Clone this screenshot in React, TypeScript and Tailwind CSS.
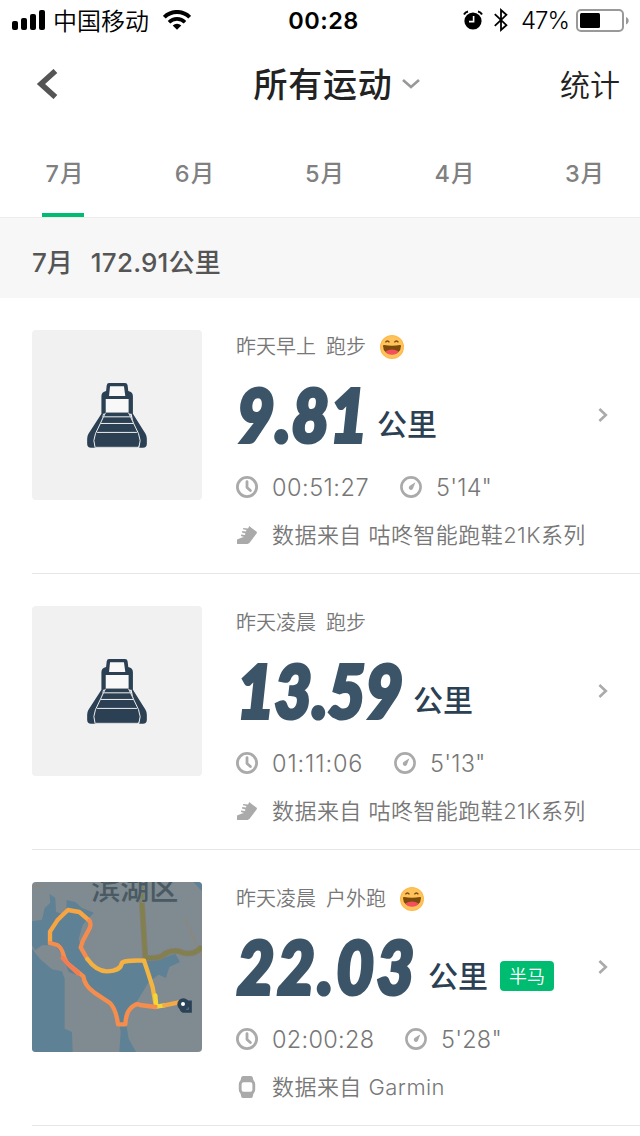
import React from "react";

type Run = {
  time: string;
  kind: string;
  mood?: boolean;
  distance: string;
  // digits are condensed, so each one reserves its own width
  distanceClass: string;
  duration: string;
  durationClass: string;
  pace: string;
  source: string;
  device: "shoe" | "watch";
  badge?: string;
  map?: boolean;
};

const months = ["7", "6", "5", "4", "3"];

const runs: Run[] = [
  {
    time: "昨天早上",
    kind: "跑步",
    mood: true,
    distance: "9.81",
    distanceClass: "w-[140px] tracking-[1.2px]",
    duration: "00:51:27",
    durationClass: "w-[128px] tracking-[0.5px]",
    pace: "5'14\"",
    source: "咕咚智能跑鞋21K系列",
    device: "shoe",
  },
  {
    time: "昨天凌晨",
    kind: "跑步",
    distance: "13.59",
    distanceClass: "w-[176px] tracking-[0.4px]",
    duration: "01:11:06",
    durationClass: "w-[122px] tracking-[0.9px]",
    pace: "5'13\"",
    source: "咕咚智能跑鞋21K系列",
    device: "shoe",
  },
  {
    time: "昨天凌晨",
    kind: "户外跑",
    mood: true,
    distance: "22.03",
    distanceClass: "w-[191px] tracking-[3.6px]",
    duration: "02:00:28",
    durationClass: "w-[133px] tracking-[0.3px]",
    pace: "5'28\"",
    source: "Garmin",
    device: "watch",
    badge: "半马",
    map: true,
  },
];

function StatusBar() {
  return (
    <div className="flex h-10 items-center pl-3 pr-[11px] text-black">
      <div className="flex flex-1 items-center">
        <svg viewBox="0 0 33 20" className="w-[33px] h-5" fill="currentColor">
          <rect x="0" y="11" width="6" height="9" rx="2" />
          <rect x="9" y="8" width="6" height="12" rx="2" />
          <rect x="18" y="4" width="6" height="16" rx="2" />
          <rect x="27" y="0" width="6" height="20" rx="2" />
        </svg>
        <span className="ml-[8px] pt-[3px] text-[24px] font-[350] leading-10">中国移动</span>
        <svg
          viewBox="0 0 28 20"
          className="ml-[14px] w-7 h-5"
          fill="none"
          stroke="currentColor"
          strokeWidth="4"
        >
          <path d="M1.3 7.2a18 18 0 0 1 25.4 0" />
          <path d="M6 12.2a11.4 11.4 0 0 1 16 0" strokeWidth="3.6" />
          <path d="M14 19.8l-4.3-4.4a6.2 6.2 0 0 1 8.6 0z" fill="currentColor" stroke="none" />
        </svg>
      </div>
      <span className="translate-x-[3px] pt-px text-[23.5px] font-semibold leading-10 tracking-[0.5px]">
        00:28
      </span>
      <div className="flex flex-1 items-center justify-end">
        <svg viewBox="0 0 20 20" className="w-5 h-5" fill="none">
          <circle cx="10" cy="11" r="8.6" fill="black" />
          <path d="M10.6 6v5.6H6" stroke="white" strokeWidth="1.6" />
          <path d="M1 4.4a6 6 0 0 1 4-3M19 4.4a6 6 0 0 0-4-3" stroke="black" strokeWidth="2" />
        </svg>
        <svg
          viewBox="0 0 14 24"
          className="ml-[11px] w-3.5 h-6"
          fill="none"
          stroke="currentColor"
          strokeWidth="1.8"
        >
          <path d="M.8 6.2l11.6 11L7 22V2l5.4 4.8L.8 17.8" />
        </svg>
        <span className="ml-[13px] pt-px text-[24px] font-[350] leading-10 tracking-[-1px]">
          47%
        </span>
        <svg viewBox="0 0 53 24" className="ml-[7px] mt-px w-[53px] h-6" fill="none">
          <rect x="1" y="1" width="46" height="21" rx="4" stroke="#999" strokeWidth="2" />
          <rect x="4" y="4" width="20" height="15" rx="1.5" fill="black" />
          <path d="M50 8c3.6 1.4 3.6 6 0 7.4z" fill="#999" />
        </svg>
      </div>
    </div>
  );
}

function NavBar() {
  return (
    <div className="flex h-[88px] items-center pl-9 pr-5 text-[#222]">
      <div className="flex-1">
        <svg
          viewBox="0 0 22 30"
          className="w-[22px] h-[30px]"
          fill="none"
          stroke="#555"
          strokeWidth="5.6"
        >
          <path d="M19.4 2L5 15l14.4 13" />
        </svg>
      </div>
      <div className="flex translate-x-[9px] items-center">
        <span className="pt-px text-[34px] font-medium leading-[50px] tracking-[0.7px]">
          所有运动
        </span>
        <svg
          viewBox="0 0 18 10"
          className="ml-[10px] w-[18px] h-2.5"
          fill="none"
          stroke="#999"
          strokeWidth="2.6"
        >
          <path d="M1 1l8 7 8-7" />
        </svg>
      </div>
      <div className="flex-1 pt-px text-right text-[30px] font-[350] leading-[44px]">统计</div>
    </div>
  );
}

function MonthTabs() {
  return (
    <div className="flex h-[90px] border-b border-[#ececec] overflow-hidden">
      <div className="-ml-0.5 flex shrink-0">
        {months.map((month, i) => (
          <button
            key={month}
            type="button"
            className="flex w-[130px] flex-col items-center text-[#808080]"
          >
            <span className="flex h-[86px] items-center pl-1 pt-[6px] text-[23.5px] font-medium tracking-[1px]">
              {month}月
            </span>
            {i === 0 && <span className="h-1 w-[42px] bg-[#00bc71]"></span>}
          </button>
        ))}
      </div>
    </div>
  );
}

function Treadmill() {
  return (
    <svg viewBox="0 0 180 196" className="w-[60px] h-[65px]" fill="#2c4054">
      <path d="M66 0h48q7 0 8 7l2 17q14 3 14 16v53l38 60q4 7 4 15v15q0 12-12 12h-12L134 93H48L24 195H12q-12 0-12-12v-15q0-8 4-15l39-60V40q0-13 14-16l2-17q1-7 7-7z" />
      <path d="M69 10h42l4 29H66zM56 48h69v42H56z" fill="#f8f8f8" />
      <path d="M53 90h74l25 57q14 28 0 48H25q-14-20 0-48z" />
      <g fill="none" stroke="#f1f1f1" strokeWidth="3">
        <path d="M55 90L25 153q-9 20-1 42M125 90l30 63q9 20 1 42M51 102h78M41 122h98M30 149h120" />
        <path d="M25 194h130" />
      </g>
    </svg>
  );
}

function RouteMap() {
  return (
    <svg viewBox="0 0 510 510" className="w-full h-full" fill="none">
      <rect width="510" height="510" fill="#808b91" />
      <g fill="#5f8195">
        <path d="M0 118L30 113 38 78 55 62 52 35 70 48 72 90 102 98 104 54 130 60 150 78 186 92 166 112 152 130 140 170 148 200 175 240 200 262H250L275 240 330 232 400 225 430 215 444 240 412 255 402 288 380 278 350 300 320 350 305 370 290 380 282 420 290 470 312 510H262L266 450 258 400 240 365 180 330 150 285 110 270 90 220 70 190 30 190 10 205 0 190z" />
        <path d="M0 200L25 232 60 262 90 268 98 290V440L120 450 122 510H0zM484 0h26v28z" />
      </g>
      <path d="M0 12h34M458 108l54 122M470 172l18-8" stroke="#8d867a" strokeWidth="4" />
      <g strokeLinejoin="round">
        <path
          d="M330 0v66l10 162q48 2 60-14 30-14 52-2 34 10 58-18"
          stroke="#887d70"
          strokeWidth="18"
        />
        <path d="M330 0v66l10 162q48 2 60-14 30-14 52-2 34 10 58-18" stroke="#80814c" strokeWidth="12" />
      </g>
      <text
        x="178"
        y="54"
        fontSize="87"
        fontWeight="500"
        fill="#4a5962"
        stroke="#7d8a91"
        strokeWidth="5"
        paintOrder="stroke"
      >
        滨湖区
      </text>
      <g strokeWidth="13" strokeLinejoin="round" strokeLinecap="round">
        <path d="M54 183v-34l22-34 16-16 16-15 34 6 30 26" stroke="#f7a442" />
        <path d="M172 116q8 12-2 28l-18 34-6 18 20 35" stroke="#f58c4e" />
        <path d="M166 231q26 36 58 37 42 0 46-26 14-8 66-6" stroke="#f4b142" />
        <path d="M336 236q12 34 26 80l10 58" stroke="#f2b541" />
        <path d="M370 340l3 34 24-4" stroke="#f5d638" />
        <path d="M397 370l44-9" stroke="#f5a944" />
        <path
          d="M54 183l22 6q12 7 18 28 4 24 28 40l32 26q4 28 32 48l48 32q18 18 24 64h22q2-34 14-46 18-20 30-12l46 6"
          stroke="#f58d4d"
        />
        <path d="M92 228q18 22 46 46" stroke="#f37c50" />
      </g>
      <path d="M445 358h32v32h-24q-8-4-8-12z" fill="#2c4257" stroke="#2c4257" strokeWidth="5" />
      <circle cx="454" cy="367" r="18" fill="#2c4257" />
      <circle cx="453" cy="366" r="6" fill="white" />
      <path d="M463 382h6v-6" stroke="#80909b" strokeWidth="2" />
    </svg>
  );
}

function Grin() {
  return (
    <svg viewBox="0 0 24 24" className="ml-[14px] w-6 h-6" fill="none">
      <circle cx="12" cy="12" r="12" fill="#ffb94b" />
      <circle cx="12" cy="12" r="10.8" fill="#ffc35b" />
      <path d="M5.4 7.4q2-2.8 4 0M14.4 7.4q2-2.8 4 0" stroke="#7d4913" strokeWidth="1.4" />
      <path d="M3 11q0-1 1-.9 8 1.2 16 0 1-.1 1 .9-.4 8-9 8t-9-8z" fill="#7d4b0a" />
      <path d="M5.2 16.6q6.8-4 13.6 0-2.2 3.2-6.8 3.2t-6.8-3.2z" fill="#f2505c" />
    </svg>
  );
}

function ClockIcon() {
  return (
    <svg
      viewBox="0 0 22 22"
      className="w-[22px] h-[22px]"
      fill="none"
      stroke="#aaa"
      strokeWidth="2.8"
    >
      <circle cx="11" cy="11" r="9.6" />
      <path d="M11 5.6v5.8l3.4 3.2" strokeLinecap="round" strokeLinejoin="round" />
    </svg>
  );
}

function PaceIcon() {
  return (
    <svg
      viewBox="0 0 22 22"
      className="w-[22px] h-[22px]"
      fill="none"
      stroke="#aaa"
      strokeWidth="2.6"
    >
      <circle cx="11" cy="11" r="9.6" />
      <path d="M15.4 6.2l-2.5 6.6a2.2 2.2 0 1 1-3-3z" fill="#aaa" stroke="none" />
    </svg>
  );
}

function DeviceIcon({ device }: { device: Run["device"] }) {
  if (device === "watch") {
    return (
      <svg viewBox="0 0 22 22" className="w-[22px] h-[22px]" fill="#aaa">
        <path d="M7 0h8q1.4 0 1.8 1.6l.8 3.8H4.4l.8-3.8Q5.6 0 7 0zM4.4 16.6h13.2l-.8 3.8Q16.4 22 15 22H7q-1.4 0-1.8-1.6z" />
        <rect
          x="4.2"
          y="4.8"
          width="13.6"
          height="12.4"
          rx="3.4"
          fill="white"
          stroke="#aaa"
          strokeWidth="2.8"
        />
      </svg>
    );
  }
  return (
    <svg viewBox="0 0 22 22" className="w-[22px] h-[22px]" fill="#aaa">
      <path d="M1 20v-4.5L6 13.5 8 13l-3-1v-1.4l4 .4.4-1.6L6 8.4 6.2 7l3.8.6.4-1.6L7 5.2 7.2 4l4.8.6L13.4 2 15 3.6l6 4.4-.4 1.4L13.4 19l-1.8 1z" />
    </svg>
  );
}

function RunItem({ run }: { run: Run }) {
  return (
    <div className="ml-8 flex h-[276px] border-b border-[#e6e6e6] pt-8">
      <div className="flex h-[170px] w-[170px] shrink-0 items-center justify-center overflow-hidden rounded bg-[#f1f1f1]">
        {run.map ? <RouteMap /> : <Treadmill />}
      </div>
      <div className="ml-[34px] flex-1 text-[#777]">
        <div className="flex h-8 items-center pt-px text-[20px] font-[350]">
          <span>{run.time}</span>
          <span className="ml-2.5">{run.kind}</span>
          {run.mood && <Grin />}
        </div>
        <div className="flex h-[106px] items-center">
          <div className={`pl-px pb-px ${run.distanceClass} box-content`}>
            <span className="inline-block origin-left scale-x-[0.88] whitespace-nowrap font-['Lato'] text-[73px] font-black italic leading-[101px] text-[#3c5468] [-webkit-text-stroke:4px_#3c5468]">
              {run.distance}
            </span>
          </div>
          <span className="pt-[18px] text-[30px] font-medium leading-9 text-[#2c4054]">公里</span>
          {run.badge && (
            <span className="ml-3 mt-[18px] flex h-[30px] w-[54px] items-center justify-center rounded bg-[#00bc71] text-[18px] font-[350] text-white">
              {run.badge}
            </span>
          )}
          <svg
            viewBox="0 0 10 14"
            className="ml-auto mr-8 w-2.5 h-3.5"
            fill="none"
            stroke="#aaa"
            strokeWidth="2.6"
          >
            <path d="M1.4 1l6.4 6-6.4 6" />
          </svg>
        </div>
        <div className="flex h-[38px] items-center text-[23.5px] font-[350]">
          <ClockIcon />
          <span className={`ml-[14px] pt-px ${run.durationClass}`}>{run.duration}</span>
          <PaceIcon />
          <span className="ml-[14px] pt-px tracking-[0.2px]">{run.pace}</span>
        </div>
        <div className="flex h-[58px] items-center text-[22px] font-[350]">
          <DeviceIcon device={run.device} />
          <span className="ml-[14px] whitespace-nowrap pt-px tracking-[0.45px]">
            数据来自 {run.source}
          </span>
        </div>
      </div>
    </div>
  );
}

export default function App() {
  return (
    <div className="h-[1136px] w-[640px] overflow-hidden bg-white font-['Inter','Noto_Sans_CJK_SC',sans-serif]">
      <StatusBar />
      <NavBar />
      <MonthTabs />
      <div className="flex h-20 items-center bg-[#f7f7f7] pl-8 pt-2 text-[26px] font-medium text-[#555]">
        <span>7月</span>
        <span className="ml-[18px] tracking-[0.2px]">172.91公里</span>
      </div>
      {runs.map((run) => (
        <RunItem key={run.distance} run={run} />
      ))}
    </div>
  );
}
